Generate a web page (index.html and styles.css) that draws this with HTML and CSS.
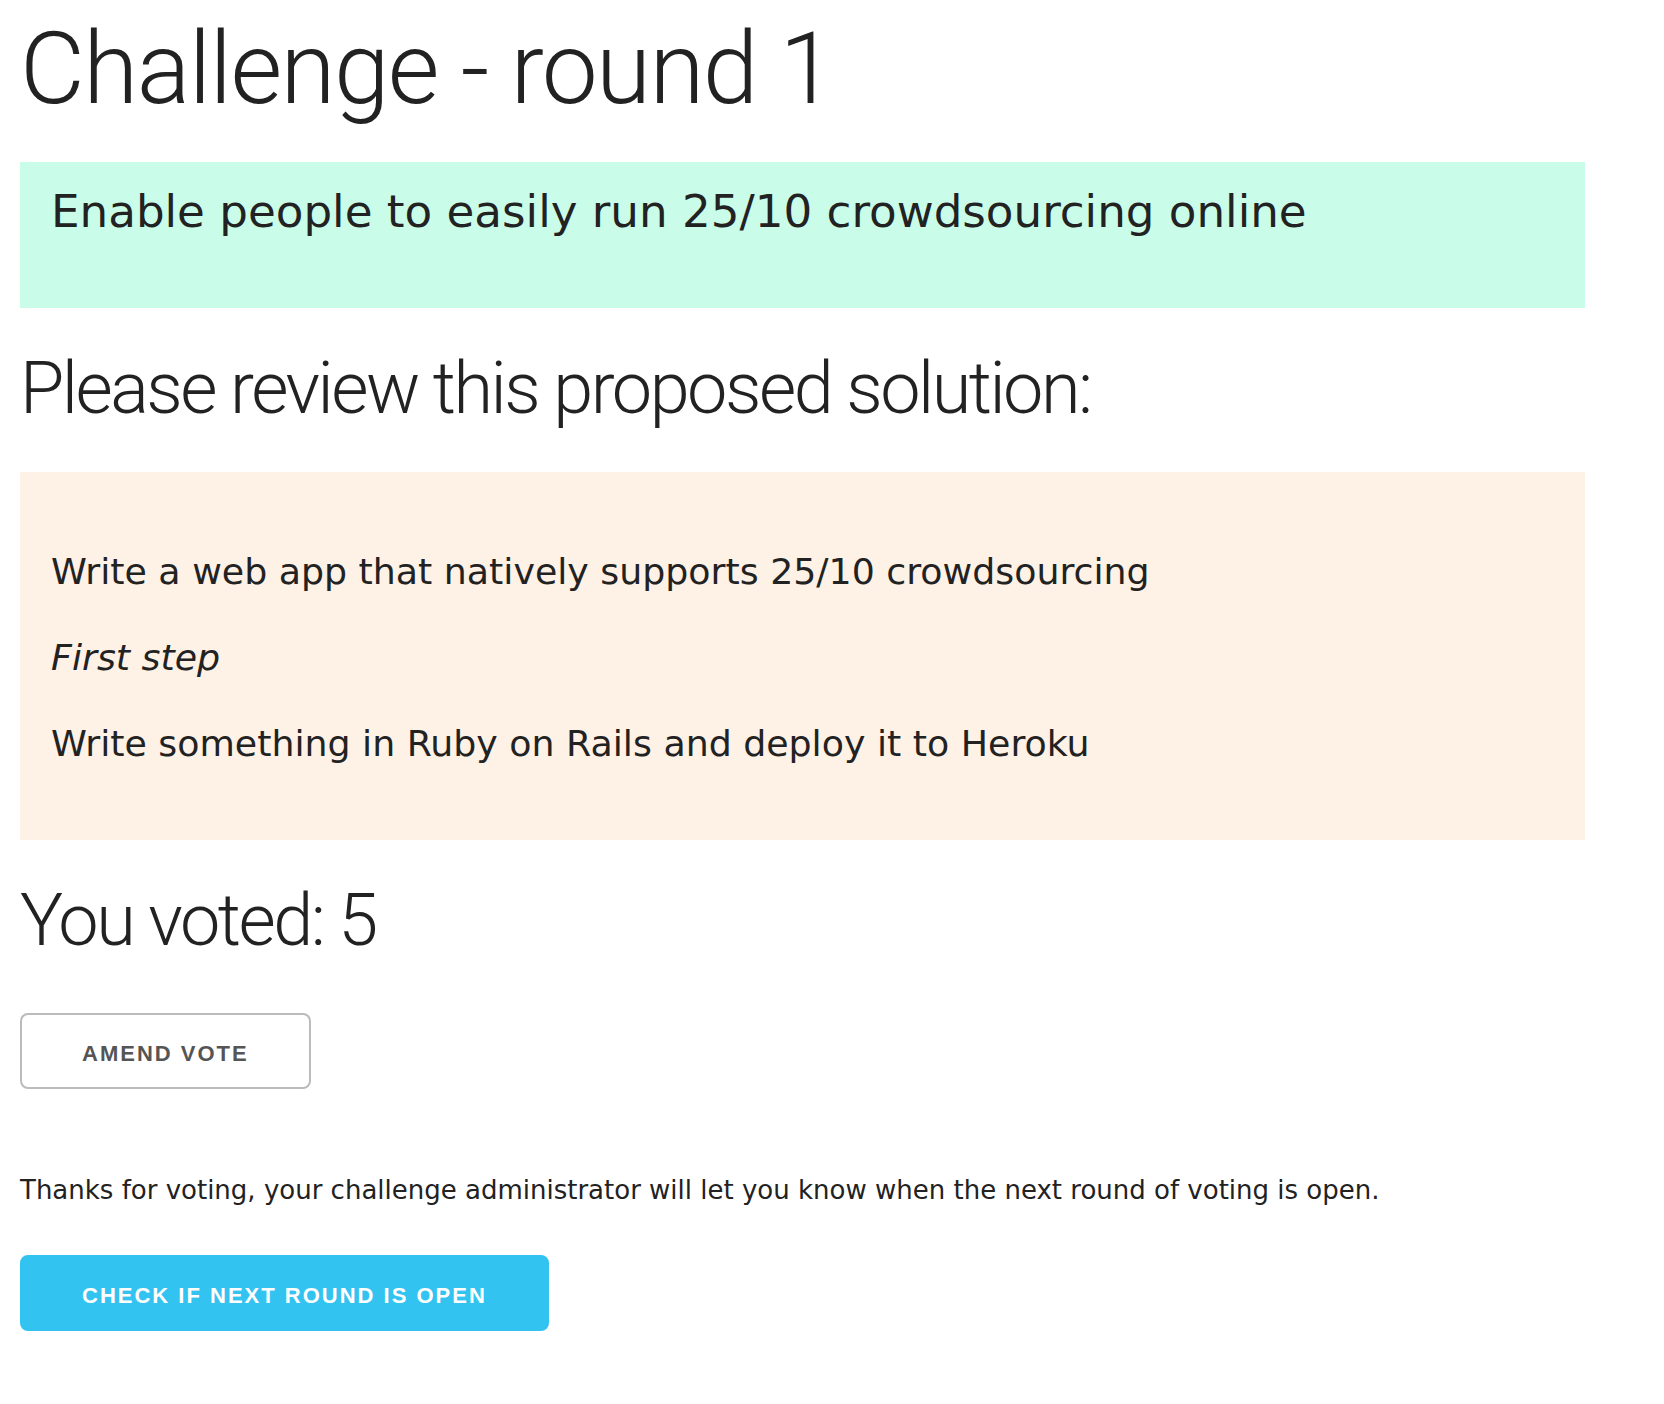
FILE: index.html
```html
<!DOCTYPE html>
<html lang="en">
<head>
<meta charset="utf-8">
<title>Challenge - round 1</title>
<link rel="stylesheet" href="styles.css">
</head>
<body>
<main class="page">
  <h1 class="title">Challenge - round 1</h1>
  <section class="challenge">
    <p class="challenge-text">Enable people to easily run 25/10 crowdsourcing online</p>
  </section>
  <h2 class="heading">Please review this proposed solution:</h2>
  <section class="solution">
    <p class="solution-line">Write a web app that natively supports 25/10 crowdsourcing</p>
    <p class="solution-line"><em>First step</em></p>
    <p class="solution-line">Write something in Ruby on Rails and deploy it to Heroku</p>
  </section>
  <h2 class="heading voted">You voted: 5</h2>
  <div class="actions">
    <button class="btn">Amend vote</button>
  </div>
  <p class="thanks">Thanks for voting, your challenge administrator will let you know when the next round of voting is open.</p>
  <div class="actions">
    <button class="btn btn-primary">Check if next round is open</button>
  </div>
</main>
</body>
</html>
```

FILE: styles.css
```css
html, body {
  margin: 0;
  padding: 0;
  background: #ffffff;
}

body {
  color: #222222;
  font-family: "DejaVu Sans", Verdana, sans-serif;
}

.page {
  padding: 0 79px 60px 20px;
  display: flex;
  flex-direction: column;
  align-items: flex-start;
}

.title {
  margin: 9px 0 0 0;
  font-family: Roboto, "Liberation Sans", sans-serif;
  font-weight: 300;
  font-size: 100px;
  line-height: 1.2;
  letter-spacing: -1.6px;
  color: #222222;
}

.challenge {
  align-self: stretch;
  margin-top: 33px;
  background: #c9fde9;
  padding: 20px 31px 66px 31px;
}

.challenge-text {
  margin: 0;
  font-size: 45.2px;
  line-height: 60px;
}

.heading {
  margin: 38px 0 0 0;
  font-family: Roboto, "Liberation Sans", sans-serif;
  font-weight: 300;
  font-size: 72px;
  line-height: 1.2;
  letter-spacing: -2.5px;
  color: #222222;
}

.solution {
  align-self: stretch;
  margin-top: 40px;
  background: #fef1e6;
  padding: 71px 31px 68px 31px;
  display: flex;
  flex-direction: column;
  gap: 28px;
}

.solution-line {
  margin: 0;
  font-size: 36.3px;
  line-height: 57.6px;
}

.voted {
  margin-top: 38px;
}

.actions {
  display: flex;
}

.voted + .actions {
  margin-top: 48px;
}

.btn {
  box-sizing: border-box;
  height: 76px;
  padding: 6px 60px 0 60px;
  border: 2px solid #bbbbbb;
  border-radius: 8px;
  background: transparent;
  color: #555555;
  font-family: "Liberation Sans", Arial, sans-serif;
  font-weight: 700;
  font-size: 22px;
  letter-spacing: 2px;
  text-transform: uppercase;
  line-height: 66px;
  cursor: pointer;
}

.btn-primary {
  background: #33c3f0;
  border-color: #33c3f0;
  color: #ffffff;
}

.thanks {
  margin: 81px 0 44px 0;
  font-size: 26px;
  line-height: 41.6px;
}
```
